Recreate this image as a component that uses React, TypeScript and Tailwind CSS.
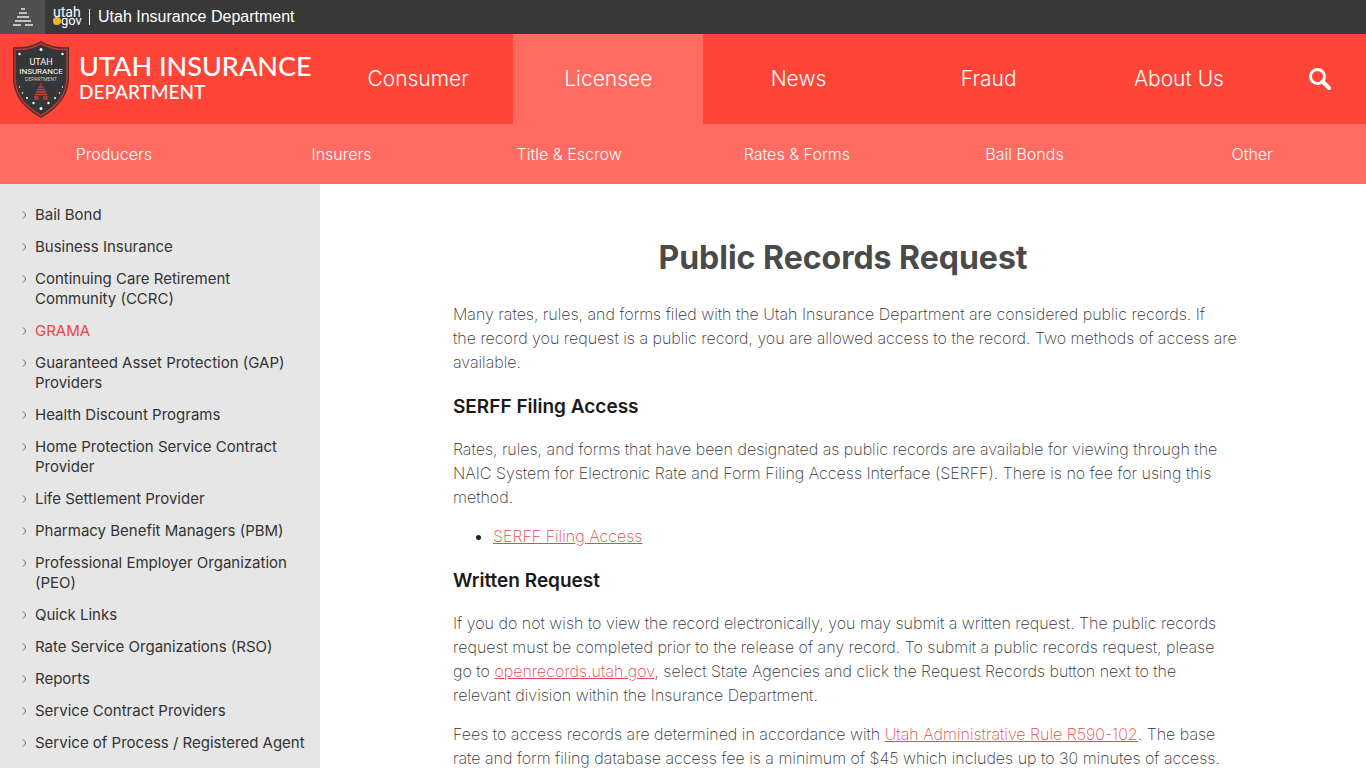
import React from "react";

const mainLinks = ["Consumer", "Licensee", "News", "Fraud", "About Us"];

const subLinks = [
  "Producers",
  "Insurers",
  "Title & Escrow",
  "Rates & Forms",
  "Bail Bonds",
  "Other",
];

const sideLinks = [
  "Bail Bond",
  "Business Insurance",
  "Continuing Care Retirement Community (CCRC)",
  "GRAMA",
  "Guaranteed Asset Protection (GAP) Providers",
  "Health Discount Programs",
  "Home Protection Service Contract Provider",
  "Life Settlement Provider",
  "Pharmacy Benefit Managers (PBM)",
  "Professional Employer Organization (PEO)",
  "Quick Links",
  "Rate Service Organizations (RSO)",
  "Reports",
  "Service Contract Providers",
  "Service of Process / Registered Agent",
];

const ShieldLogo = () => (
  <svg width="56" height="78" viewBox="0 0 56 78" aria-hidden="true">
    <path
      d="M28 1 C20 6 10 8 0 7 V37 C0 56 11 68 28 78 C45 68 56 56 56 37 V7 C46 8 36 6 28 1Z"
      fill="#4a3033"
    />
    <path
      d="M28 3.500 C20 8 11 10 2 9.300 V37 C2 55 12 66 28 75.500 C44 66 54 55 54 37 V9.300 C45 10 36 8 28 3.500Z"
      fill="#343638"
      stroke="#b03a38"
      strokeWidth="1.500"
    />
    <g fill="#fff">
      <circle cx="28" cy="9.500" r="1.500" />
      <circle cx="6.500" cy="14" r="1.200" />
      <circle cx="49.500" cy="14" r="1.200" />
      <circle cx="28" cy="68.500" r="1.500" />
      <circle cx="20.500" cy="63" r="1.200" />
      <circle cx="35.500" cy="63" r="1.200" />
      <circle cx="14" cy="58" r="1" />
      <circle cx="42" cy="58" r="1" />
      <circle cx="9.500" cy="53" r=".8" />
      <circle cx="46.500" cy="53" r=".8" />
      <circle cx="6.500" cy="47" r=".7" />
      <circle cx="49.500" cy="47" r=".7" />
    </g>
    <g fill="#fff" textAnchor="middle" fontFamily="Roboto, sans-serif">
      <text x="28" y="25" fontSize="9">UTAH</text>
      <text x="28" y="34" fontSize="8">INSURANCE</text>
      <text x="28" y="41" fontSize="5" fill="#c9c9c9">DEPARTMENT</text>
    </g>
    <path
      d="M28 43.500v2M25.500 47h5M24 49.500h8M22.800 52h10.400M21.800 54.500h12.400M21.300 57h4.500M30.200 57h4.500M21.300 59h4.500M30.200 59h4.500"
      stroke="#c7423d"
      strokeWidth="1.600"
    />
  </svg>
);

const UtahGovLogo = () => (
  <svg width="30" height="26" viewBox="0 0 30 26" role="img" aria-label="Utah.gov">
    <g fill="#fff" fontFamily="Roboto, sans-serif">
      <text x="0" y="13" fontSize="14">utah</text>
      <text x="8" y="21" fontSize="13">gov</text>
    </g>
    <circle cx="4" cy="17" r="4" fill="#f5b32a" />
  </svg>
);

const Beehive = () => (
  <svg width="20" height="18" viewBox="0 0 20 18" aria-hidden="true">
    <path
      d="M8 1h4M6 5h8M4 9h12M2 13h16M0 17h8M12 17h8"
      stroke="#e6e6e6"
      strokeWidth="1.600"
    />
  </svg>
);

const TopBar = () => (
  <div className="flex h-[34px] items-center bg-[#383838] font-['Liberation_Sans',sans-serif] text-base text-white">
    <button
      type="button"
      aria-label="Utah.gov menu"
      className="flex h-full w-[45px] items-center justify-center bg-[#505050]"
    >
      <Beehive />
    </button>
    <a href="#" className="ml-2">
      <UtahGovLogo />
    </a>
    <span className="ml-1.5 h-4 w-px bg-white" />
    <a href="#" className="ml-2">
      Utah Insurance Department
    </a>
  </div>
);

const Header = () => (
  <header className="flex h-[90px] bg-[#ff4438] text-white">
    <a href="#" className="flex w-[323px] shrink-0 items-center pl-[13px]">
      <ShieldLogo />
      <span className="ml-2.5 pb-0.5 font-['Lato',sans-serif] font-medium">
        <span className="block text-[27px] leading-7 whitespace-nowrap">
          UTAH INSURANCE
        </span>
        <span className="block text-[19px] leading-6">DEPARTMENT</span>
      </span>
    </a>
    <nav className="flex flex-1">
      {mainLinks.map((name) => (
        <a
          key={name}
          href="#"
          className={`flex flex-1 items-center justify-center text-[21px] font-light ${
            name === "Licensee" ? "bg-[#ff6b61]" : ""
          }`}
        >
          {name}
        </a>
      ))}
    </nav>
    <button
      type="button"
      aria-label="Search"
      className="flex w-[92px] items-center justify-center"
    >
      <svg width="22" height="22" viewBox="0 0 22 22" fill="none" stroke="#fff">
        <circle cx="8.500" cy="8.500" r="7" strokeWidth="3" />
        <path d="M13.500 13.500l6.500 6.500" strokeWidth="4" strokeLinecap="round" />
      </svg>
    </button>
  </header>
);

const SubNav = () => (
  <nav className="grid h-[60px] grid-cols-6 bg-[#ff6b61] text-base font-light text-white">
    {subLinks.map((name) => (
      <a key={name} href="#" className="flex items-center justify-center">
        {name}
      </a>
    ))}
  </nav>
);

const Sidebar = () => (
  <aside className="w-80 shrink-0 bg-[#e6e6e6] pt-[21px] pb-8 pl-[22px]">
    <ul className="flex flex-col gap-3 text-[15px] leading-5 text-[#333]">
      {sideLinks.map((name) => (
        <li key={name} className="flex gap-2">
          <svg
            width="5"
            height="8"
            viewBox="0 0 5 8"
            className="mt-1.5 shrink-0"
            fill="none"
            stroke="#666"
            aria-hidden="true"
          >
            <path d="M1 .5 Q3.500 2.500 3.500 4 Q3.500 5.500 1 7.500" />
          </svg>
          <a
            href="#"
            className={`max-w-[276px] ${name === "GRAMA" ? "text-[#f0443f]" : ""}`}
          >
            {name}
          </a>
        </li>
      ))}
    </ul>
  </aside>
);

const TextLink = ({ children }: { children: React.ReactNode }) => (
  <a href="#" className="text-[#e8484d] underline">
    {children}
  </a>
);

const Content = () => (
  <main className="flex-1 px-8 pt-[54px]">
    <article className="mx-auto max-w-[780px] text-base leading-6 font-extralight text-[#333]">
      <h1 className="text-center text-[32px] leading-10 font-bold text-[#4a4a4a]">
        Public Records Request
      </h1>
      <p className="-mr-6 mt-6">
        Many rates, rules, and forms filed with the Utah Insurance Department are
        considered public records. If
        <br />
        the record you request is a public record, you are allowed access to the
        record. Two methods of access are
        <br />
        available.
      </p>
      <h2 className="mt-[21px] text-[19px] leading-6 font-semibold text-[#1a1a1a]">
        SERFF Filing Access
      </h2>
      <p className="mt-[18px]">
        Rates, rules, and forms that have been designated as public records are
        available for viewing through the NAIC System for Electronic Rate and
        Form Filing Access Interface (SERFF). There is no fee for using this
        method.
      </p>
      <ul className="mt-[15px] list-disc pl-10 marker:text-[#222]">
        <li>
          <TextLink>SERFF Filing Access</TextLink>
        </li>
      </ul>
      <h2 className="mt-[21px] text-[19px] leading-6 font-semibold text-[#1a1a1a]">
        Written Request
      </h2>
      <p className="mt-[18px]">
        If you do not wish to view the record electronically, you may submit a
        written request. The public records request must be completed prior to
        the release of any record. To submit a public records request, please
        <br />
        go to <TextLink>openrecords.utah.gov</TextLink>, select State Agencies and
        click the Request Records button next to the
        <br />
        relevant division within the Insurance Department.
      </p>
      <p className="-mr-6 mt-[15px]">
        Fees to access records are determined in accordance with{" "}
        <TextLink>Utah Administrative Rule R590-102</TextLink>. The base
        <br />
        rate and form filing database access fee is a minimum of $45 which
        includes up to 30 minutes of access.
      </p>
    </article>
  </main>
);

const App = () => {
  return (
    <div className="h-screen overflow-hidden bg-white font-['Inter',sans-serif]">
      <TopBar />
      <Header />
      <SubNav />
      <div className="flex">
        <Sidebar />
        <Content />
      </div>
    </div>
  );
};

export default App;
